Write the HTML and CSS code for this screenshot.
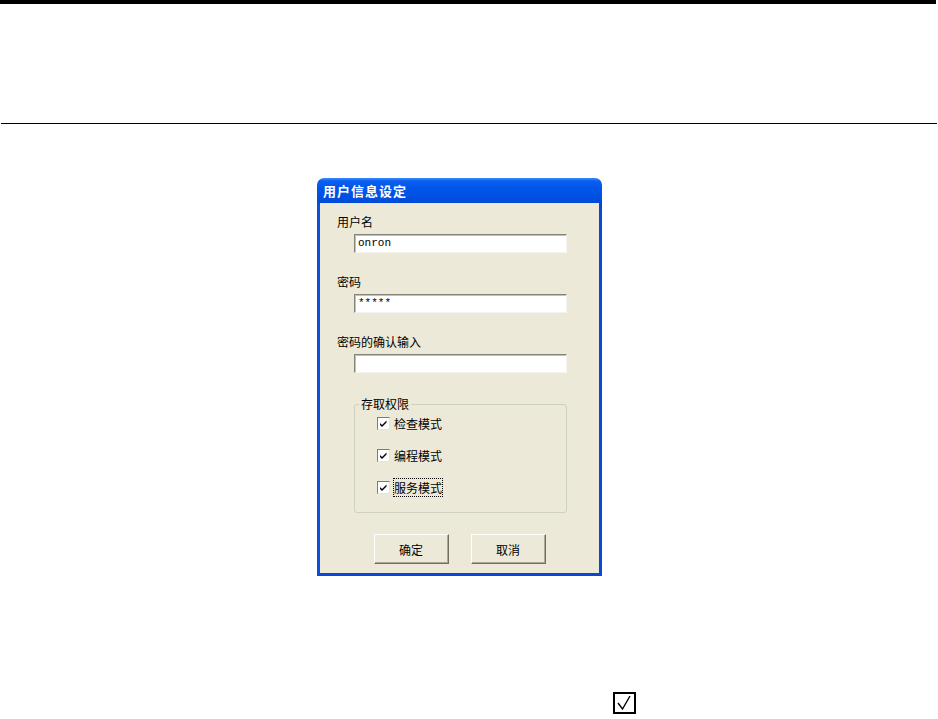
FILE: index.html
```html
<!DOCTYPE html>
<html>
<head>
    <meta charset="utf-8">
    <title>用户信息设定</title>
    <link rel="stylesheet" href="styles.css">
</head>
<body>
    <div class="topbar"></div>
    <div class="rule"></div>

    <div class="dialog">
        <div class="titlebar">用户信息设定</div>
        <div class="dialog-body">
            <div class="field">
                <div class="label">用户名</div>
                <div class="textbox">onron</div>
            </div>
            <div class="field">
                <div class="label">密码</div>
                <div class="textbox">*****</div>
            </div>
            <div class="field">
                <div class="label">密码的确认输入</div>
                <div class="textbox"></div>
            </div>

            <fieldset class="group">
                <legend>存取权限</legend>
                <div class="check-row">
                    <span class="checkbox"><svg width="11" height="11" viewBox="0 0 11 11"><path d="M2 5 L4 7 L8.5 2.5 L8.5 4.5 L4 9 L2 7 Z" fill="#000"/></svg></span>
                    <span>检查模式</span>
                </div>
                <div class="check-row">
                    <span class="checkbox"><svg width="11" height="11" viewBox="0 0 11 11"><path d="M2 5 L4 7 L8.5 2.5 L8.5 4.5 L4 9 L2 7 Z" fill="#000"/></svg></span>
                    <span>编程模式</span>
                </div>
                <div class="check-row">
                    <span class="checkbox"><svg width="11" height="11" viewBox="0 0 11 11"><path d="M2 5 L4 7 L8.5 2.5 L8.5 4.5 L4 9 L2 7 Z" fill="#000"/></svg></span>
                    <span class="focused">服务模式</span>
                </div>
            </fieldset>

            <div class="buttons">
                <button class="btn">确定</button>
                <button class="btn">取消</button>
            </div>
        </div>
    </div>

    <div class="mark">
        <svg width="23" height="22" viewBox="0 0 23 22">
            <rect x="1" y="1" width="21" height="20" fill="none" stroke="#000" stroke-width="2"/>
            <polyline points="5,11 9.5,17 17,4" fill="none" stroke="#000" stroke-width="1.4"/>
        </svg>
    </div>
</body>
</html>
```

FILE: styles.css
```css
body {
    margin: 0;
    background: #fff;
    font-family: "Noto Sans CJK SC", "DejaVu Sans", sans-serif;
    font-size: 12px;
    color: #000;
}

.topbar {
    height: 4px;
    margin-right: 2px;
    background: #000;
}

.rule {
    height: 1px;
    margin: 119px 1px 0 1px;
    background: #000;
}

.dialog {
    width: 285px;
    margin: 54px 0 0 317px;
}

.titlebar {
    height: 25px;
    padding-left: 6px;
    border-radius: 7px 7px 0 0;
    background: linear-gradient(#3b8cff 0%, #0a5ff0 12%, #0055e8 45%, #0050e0 80%, #0048d4 100%);
    color: #fff;
    font-weight: bold;
    font-size: 13px;
    letter-spacing: 1px;
    line-height: 25px;
}

.dialog-body {
    background: #ece9d8;
    border: 3px solid #0a47d9;
    border-top: none;
    border-left-color: #0b4fe0;
    padding: 12px 0 9px 17px;
}

.field {
    margin-bottom: 22px;
}

.field:nth-child(3) {
    margin-bottom: 0;
}

.label {
    line-height: 14px;
    height: 14px;
}

.textbox {
    box-sizing: border-box;
    width: 213px;
    height: 19px;
    margin: 5px 0 0 17px;
    padding: 2px 0 0 3px;
    background: #fff;
    border: 1px solid;
    border-color: #858478 #f4f3ee #f4f3ee #858478;
    box-shadow: inset 1px 1px 0 #c4c2b6;
    font-family: "Liberation Mono", "DejaVu Sans Mono", monospace;
    font-size: 11px;
    line-height: 13px;
}

.group {
    width: 213px;
    box-sizing: border-box;
    margin: 24px 0 0 17px;
    padding: 5px 0 18px 4px;
    border: 1px solid #d0d0bf;
    border-radius: 3px;
}

.group legend {
    padding: 0 2px;
    line-height: 14px;
}

.check-row {
    display: flex;
    align-items: center;
    gap: 4px;
    height: 14px;
    margin: 0 0 18px 18px;
}

.check-row:last-child {
    margin-bottom: 0;
}

.checkbox {
    display: flex;
    align-items: center;
    justify-content: center;
    width: 11px;
    height: 11px;
    background: #fff;
    border: 1px solid;
    border-color: #7b7a70 #e6e4da #e6e4da #7b7a70;
}

.focused {
    outline: 1px dotted #000;
    outline-offset: 0;
}

.buttons {
    display: flex;
    justify-content: center;
    gap: 22px;
    margin-top: 21px;
    padding-right: 17px;
}

.btn {
    width: 75px;
    height: 30px;
    background: #ece9d8;
    border: 1px solid;
    border-color: #fff #716f64 #716f64 #fff;
    box-shadow: inset -1px -1px 0 #aca899;
    font-family: "Noto Sans CJK SC", sans-serif;
    font-size: 12px;
    color: #000;
    padding: 0;
}

.mark {
    margin: 116px 0 0 613px;
    line-height: 0;
}
```
